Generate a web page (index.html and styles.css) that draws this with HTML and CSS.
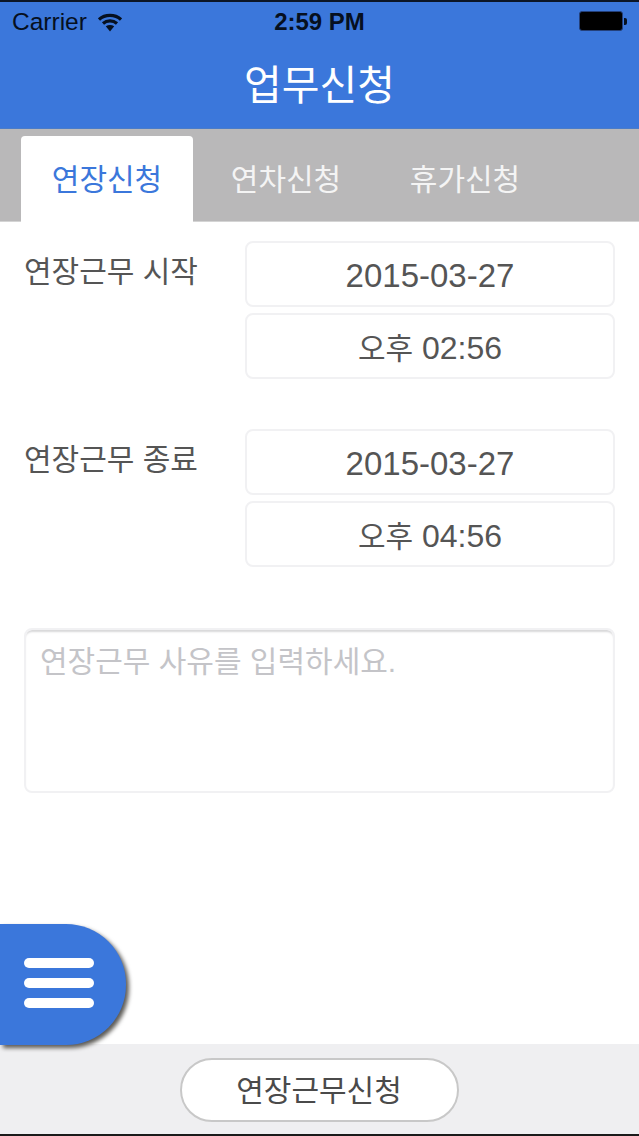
FILE: index.html
```html
<!DOCTYPE html>
<html lang="ko">
<head>
    <meta charset="UTF-8">
    <meta name="viewport" content="width=device-width, initial-scale=1.0">
    <title>업무신청</title>
    <link rel="stylesheet" href="styles.css">
</head>
<body>
    <div class="app">
        <header class="top">
            <div class="status">
                <div class="status-left">
                    <span>Carrier</span>
                    <svg class="wifi" width="24" height="19" viewBox="0 0 24 19">
                        <path d="M1 6.5C7 1 17 1 23 6.5" fill="none" stroke="#06101f" stroke-width="3.2"/>
                        <path d="M5 10.5C9 7 15 7 19 10.5" fill="none" stroke="#06101f" stroke-width="3.2"/>
                        <path d="M7.8 13.3C10.5 11.4 13.5 11.4 16.2 13.3L12 18.5Z" fill="#06101f"/>
                    </svg>
                </div>
                <div class="status-time">2:59 PM</div>
                <div class="status-right">
                    <span class="battery"></span>
                    <span class="battery-tip"></span>
                </div>
            </div>
            <h1 class="title">업무신청</h1>
        </header>

        <nav class="tabs">
            <div class="tab active">연장신청</div>
            <div class="tab">연차신청</div>
            <div class="tab">휴가신청</div>
        </nav>

        <main class="content">
            <section class="row">
                <div class="row-label">연장근무 시작</div>
                <div class="row-fields">
                    <div class="field">2015-03-27</div>
                    <div class="field field-time"><span class="ampm">오후</span> 02:56</div>
                </div>
            </section>
            <section class="row">
                <div class="row-label">연장근무 종료</div>
                <div class="row-fields">
                    <div class="field">2015-03-27</div>
                    <div class="field field-time"><span class="ampm">오후</span> 04:56</div>
                </div>
            </section>
            <div class="reason">연장근무 사유를 입력하세요.</div>
        </main>

        <div class="fab">
            <span class="fab-line"></span>
            <span class="fab-line"></span>
            <span class="fab-line"></span>
        </div>

        <footer class="bottom">
            <div class="submit">연장근무신청</div>
        </footer>
    </div>
</body>
</html>
```

FILE: styles.css
```css
* {
    box-sizing: border-box;
}
html, body {
    margin: 0;
    padding: 0;
}
body {
    font-family: "Liberation Sans", "Noto Sans CJK KR", sans-serif;
    background-color: #fff;
}
.app {
    position: relative;
    display: flex;
    flex-direction: column;
    height: 1136px;
    overflow: hidden;
    border-top: 2px solid #0c1626;
    border-bottom: 2px solid #1a1a1a;
}

/* header */
.top {
    height: 127px;
    background-color: #3b77db;
    border-bottom: 1px solid #4a7cc8;
}
.status {
    display: flex;
    align-items: center;
    justify-content: space-between;
    height: 40px;
    padding: 0 12px;
    font-size: 24.5px;
    color: #06101f;
}
.status-left {
    display: flex;
    align-items: center;
    gap: 11px;
    width: 200px;
}
.status-time {
    font-weight: bold;
    font-size: 24px;
}
.status-right {
    display: flex;
    align-items: center;
    justify-content: flex-end;
    width: 200px;
    margin-top: -2px;
}
.battery {
    width: 44px;
    height: 20px;
    margin-right: 1px;
    background-color: #000;
    border: 1px solid #24407a;
    border-radius: 3px;
}
.battery-tip {
    width: 3px;
    height: 7px;
    background-color: #06101f;
    border-radius: 0 2px 2px 0;
}
.title {
    margin: 0;
    padding-top: 2px;
    text-align: center;
    font-size: 41px;
    font-weight: normal;
    line-height: 84px;
    color: #fff;
}

/* tabs */
.tabs {
    display: flex;
    gap: 7px;
    height: 93px;
    padding: 7px 0 0 21px;
    background-color: #b9b8b9;
    border-bottom: 1px solid #d4d4d4;
}
.tab {
    width: 172px;
    height: 86px;
    padding-top: 9px;
    text-align: center;
    font-size: 30px;
    line-height: 70px;
    color: #f4f4f4;
}
.tab.active {
    background-color: #fff;
    border-radius: 4px 4px 0 0;
    color: #3b77db;
}

/* form */
.content {
    flex: 1;
    padding: 19px 24px 0 24px;
}
.row {
    display: flex;
    margin-bottom: 50px;
}
.row-label {
    width: 221px;
    padding-top: 9px;
    font-size: 30px;
    line-height: 44px;
    color: #555;
}
.row-fields {
    flex: 1;
    display: flex;
    flex-direction: column;
    gap: 6px;
}
.field {
    height: 66px;
    border: 2px solid #f1f1f3;
    border-radius: 8px;
    text-align: center;
    font-size: 33px;
    line-height: 66px;
    color: #555;
}
.field-time {
    font-size: 32px;
}
.ampm {
    font-size: 30px;
}
.reason {
    height: 165px;
    margin-top: 61px;
    padding: 10px 14px;
    border: 2px solid #f1f1f3;
    border-radius: 8px;
    box-shadow: inset 0 3px 2px -1px #d8d8da;
    font-size: 30px;
    line-height: 44px;
    color: #c4c4c8;
}

/* menu button */
.fab {
    position: absolute;
    left: 0;
    top: 922px;
    display: flex;
    flex-direction: column;
    gap: 10px;
    width: 126px;
    height: 121px;
    padding: 34px 0 0 24px;
    background-color: #3b77db;
    border-radius: 0 60px 60px 0;
    box-shadow: 3px 3px 4px #5c5a56;
}
.fab-line {
    width: 70px;
    height: 10px;
    background-color: #fff;
    border-radius: 5px;
}

/* footer */
.bottom {
    display: flex;
    align-items: center;
    justify-content: center;
    height: 90px;
    padding: 2px 1px 0 0;
    background-color: #efeff1;
}
.submit {
    width: 279px;
    height: 64px;
    padding-top: 1px;
    background-color: #fff;
    border: 2px solid #c8c8c8;
    border-radius: 32px;
    text-align: center;
    font-size: 30px;
    line-height: 60px;
    color: #4a4a4a;
}
```
